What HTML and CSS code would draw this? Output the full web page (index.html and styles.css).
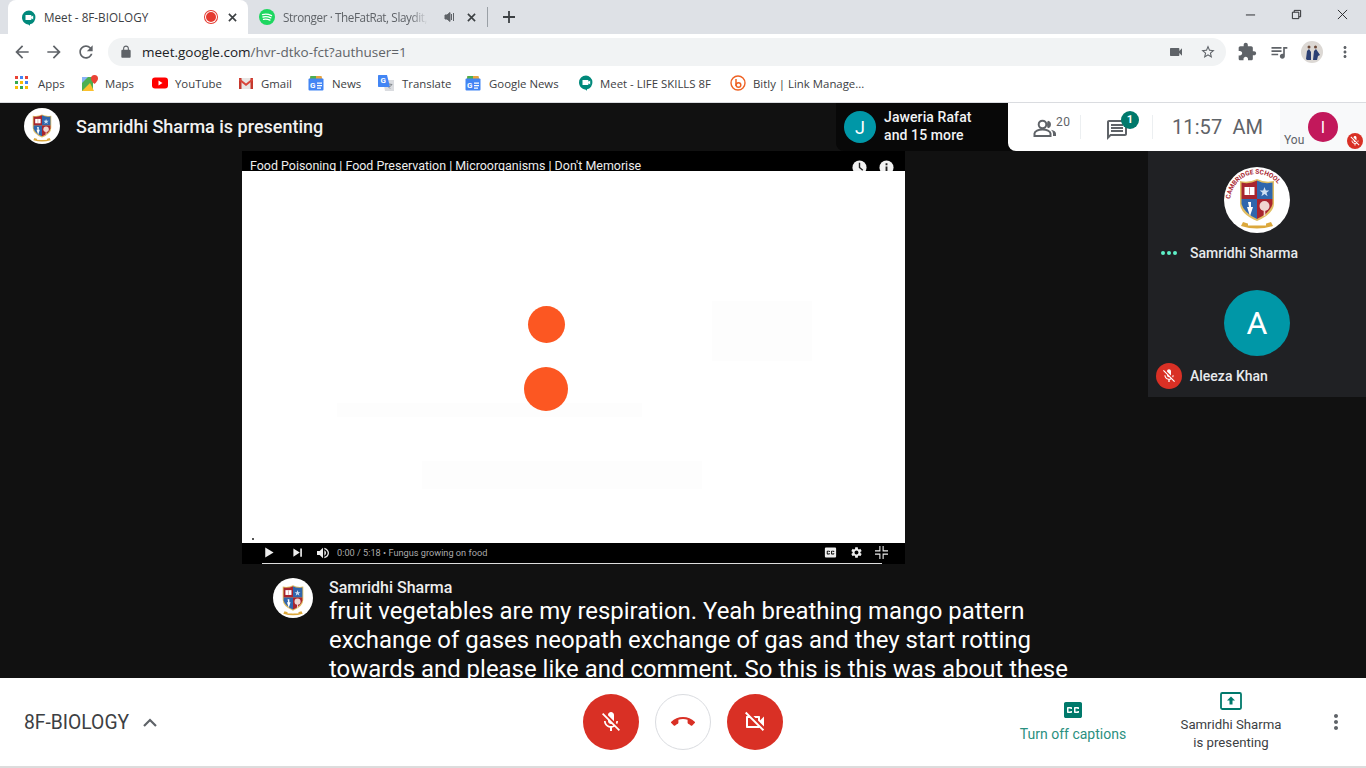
FILE: index.html
```html
<!DOCTYPE html>
<html lang="en">
<head>
    <meta charset="UTF-8">
    <title>Meet - 8F-BIOLOGY</title>
    <link rel="stylesheet" href="styles.css">
</head>
<body>
    <svg class="sprite" width="0" height="0">
        <symbol id="crest" viewBox="0 0 66 66">
            <circle cx="33" cy="33" r="33" fill="#fff"/>
            <path d="M16 14q9 2 17-2 8 4 17 2v22q0 11-17 18-17-7-17-18z" fill="#e0bd62"/>
            <path d="M17.500 15.500q8 2 15.500-2v18.500H17.500z" fill="#a8252f"/>
            <path d="M33 13.500q7 4 15.500 2V32H33z" fill="#2f66ad"/>
            <path d="M17.500 32H33v20q-13-6-15.500-15z" fill="#2f66ad"/>
            <path d="M33 32h15.500v5q-2.500 9-15.500 15z" fill="#a8252f"/>
            <path d="M20.500 20h10v8h-10z" fill="#fff"/>
            <path d="M25.500 20.500v7" stroke="#a8252f" stroke-width=".6"/>
            <path d="M40.500 20l1.300 3.500h3.500l-2.800 2.200 1.100 3.500-3.100-2.200-3.100 2.200 1.100-3.500-2.800-2.200h3.500z" fill="#cfe0f2"/>
            <path d="M24 35h3v5h2l-3 9-3-9h2z" fill="#fff"/>
            <circle cx="40.500" cy="39" r="5" fill="#f0d6d0"/>
            <path d="M39.700 43h1.600v6h-1.600z" fill="#f0d6d0"/>
            <path d="M19 55q14 6 28 0l2 4q-16 5-32 0z" fill="#dca83c"/>
            <path d="M24 55.500h18v3H24z" fill="#fff"/>
        </symbol>
        <symbol id="meetIcon" viewBox="0 0 16 16">
            <path d="M8 .5a7 7 0 0 0-7 7c0 3.600 2.800 6.500 6.300 6.900l1.700 1.400v-1.500a7 7 0 0 0-1-13.800z" fill="#00897b"/>
            <path d="M4.500 5h5.200c.4 0 .8.300.8.800v.9l1.700-1.300v4.200l-1.700-1.300v.9c0 .5-.4.800-.8.800H4.500z" fill="#fff"/>
        </symbol>
        <symbol id="micOff" viewBox="0 0 24 24">
            <path d="M19 11h-1.700c0 .74-.16 1.430-.43 2.050l1.230 1.230c.56-.98.9-2.090.9-3.280zm-4.020.17c0-.06.02-.11.02-.17V5c0-1.660-1.340-3-3-3S9 3.340 9 5v.18l5.980 5.990zM4.270 3L3 4.270l6.010 6.010V11c0 1.660 1.330 3 2.990 3 .22 0 .44-.03.65-.08l1.660 1.660c-.71.33-1.500.52-2.310.52-2.760 0-5.300-2.100-5.300-5.100H5c0 3.410 2.720 6.230 6 6.720V21h2v-3.280c.91-.13 1.770-.45 2.540-.9L19.730 21 21 19.730 4.270 3z" fill="currentColor"/>
        </symbol>
    </svg>

    <div class="tabstrip">
        <div class="tab tab-active">
            <svg class="favicon"><use href="#meetIcon"/></svg>
            <span class="tab-title">Meet - 8F-BIOLOGY</span>
            <span class="rec-dot"></span>
            <svg class="tab-close" viewBox="0 0 10 10"><path d="M1 1l8 8M9 1l-8 8"/></svg>
        </div>
        <div class="tab tab-other">
            <svg class="favicon" viewBox="0 0 16 16">
                <circle cx="8" cy="8" r="8" fill="#1ed760"/>
                <path d="M3.500 5.600q4.500-1.200 9 1M4 8q4-1 7.800.9M4.500 10.300q3.300-.8 6.400.8" fill="none" stroke="#fff" stroke-width="1.300" stroke-linecap="round"/>
            </svg>
            <span class="tab-title tab-fade">Stronger · TheFatRat, Slaydit,</span>
            <svg class="tab-audio" viewBox="0 0 12 12"><path d="M1 4h2l3-2.500v9L3 8H1zM7.500 3v6M9.500 2v8" fill="#5f6368" stroke="#5f6368"/></svg>
            <svg class="tab-close" viewBox="0 0 10 10"><path d="M1 1l8 8M9 1l-8 8"/></svg>
        </div>
        <span class="tab-sep"></span>
        <svg class="new-tab" viewBox="0 0 12 12"><path d="M6 0v12M0 6h12"/></svg>
        <div class="window-btns">
            <svg viewBox="0 0 12 12"><path d="M1 6.500h10"/></svg>
            <svg viewBox="0 0 12 12"><path d="M1.500 3.500h7v7h-7zM3.500 3.500v-2h7v7h-2"/></svg>
            <svg viewBox="0 0 12 12"><path d="M1 1l10 10M11 1L1 11"/></svg>
        </div>
    </div>

    <div class="toolbar">
        <svg class="tool-icon" viewBox="0 0 24 24"><path d="M20 11H7.830l5.590-5.590L12 4l-8 8 8 8 1.410-1.410L7.830 13H20v-2z"/></svg>
        <svg class="tool-icon" viewBox="0 0 24 24"><path d="M12 4l-1.410 1.410L16.170 11H4v2h12.170l-5.580 5.590L12 20l8-8z"/></svg>
        <svg class="tool-icon" viewBox="0 0 24 24"><path d="M17.650 6.350C16.200 4.900 14.210 4 12 4c-4.420 0-7.990 3.580-7.990 8s3.570 8 7.990 8c3.730 0 6.840-2.550 7.730-6h-2.080c-.82 2.330-3.040 4-5.650 4-3.310 0-6-2.690-6-6s2.690-6 6-6c1.660 0 3.140.69 4.220 1.780L13 11h7V4l-2.350 2.350z"/></svg>
        <div class="omnibox">
            <svg class="lock" viewBox="0 0 24 24"><path d="M18 8h-1V6c0-2.760-2.240-5-5-5S7 3.240 7 6v2H6c-1.100 0-2 .9-2 2v10c0 1.100.9 2 2 2h12c1.100 0 2-.9 2-2V10c0-1.100-.9-2-2-2zm-2.900 0H8.900V6c0-1.710 1.390-3.100 3.100-3.100 1.710 0 3.100 1.390 3.100 3.100v2z"/></svg>
            <span class="url"><b>meet.google.com</b>/hvr-dtko-fct?authuser=1</span>
            <svg class="omni-icon" viewBox="0 0 24 24"><path d="M17 10.500V7c0-.55-.45-1-1-1H4c-.55 0-1 .45-1 1v10c0 .55.45 1 1 1h12c.55 0 1-.45 1-1v-3.500l4 4v-11l-4 4z"/></svg>
            <svg class="omni-icon" viewBox="0 0 24 24"><path d="M22 9.240l-7.190-.62L12 2 9.190 8.630 2 9.240l5.460 4.730L5.820 21 12 17.270 18.180 21l-1.630-7.030L22 9.240zM12 15.400l-3.760 2.270 1-4.280-3.320-2.880 4.380-.38L12 6.100l1.710 4.040 4.380.38-3.320 2.880 1 4.280L12 15.400z"/></svg>
        </div>
        <svg class="tool-icon" viewBox="0 0 24 24"><path d="M20.500 11H19V7c0-1.100-.9-2-2-2h-4V3.500C13 2.120 11.880 1 10.500 1S8 2.120 8 3.500V5H4c-1.100 0-1.990.9-1.990 2v3.800H3.500c1.490 0 2.700 1.210 2.700 2.700s-1.210 2.700-2.700 2.700H2V20c0 1.100.9 2 2 2h3.800v-1.500c0-1.490 1.210-2.700 2.700-2.700 1.490 0 2.700 1.210 2.700 2.700V22H17c1.100 0 2-.9 2-2v-4h1.500c1.380 0 2.500-1.120 2.500-2.500S21.880 11 20.500 11z"/></svg>
        <svg class="tool-icon" viewBox="0 0 24 24"><path d="M15 6H3v2h12V6zm0 4H3v2h12v-2zM3 16h8v-2H3v2zM17 6v8.180c-.31-.11-.65-.18-1-.18-1.660 0-3 1.340-3 3s1.340 3 3 3 3-1.340 3-3V8h3V6h-5z"/></svg>
        <svg class="profile" viewBox="0 0 22 22">
            <circle cx="11" cy="11" r="11" fill="#dcd8d4"/>
            <path d="M5 18l1-8 2-2 2 3v8H6zM12 19l1-9 2-2 2 3 2 3-2 1-1 4z" fill="#2b3f73"/>
            <circle cx="8" cy="6" r="1.500" fill="#6b4a3a"/>
            <circle cx="14.500" cy="6" r="1.500" fill="#6b4a3a"/>
        </svg>
        <svg class="tool-icon" viewBox="0 0 24 24"><path d="M12 8c1.100 0 2-.9 2-2s-.9-2-2-2-2 .9-2 2 .9 2 2 2zm0 2c-1.100 0-2 .9-2 2s.9 2 2 2 2-.9 2-2-.9-2-2-2zm0 6c-1.100 0-2 .9-2 2s.9 2 2 2 2-.9 2-2-.9-2-2-2z"/></svg>
    </div>

    <div class="bookmarks">
        <a class="bm bm-apps">
            <svg class="bm-icon" viewBox="0 0 14 14">
                <path d="M0 0h3v3H0z" fill="#ea4335"/><path d="M5 0h3v3H5z" fill="#4285f4"/><path d="M10 0h3v3h-3z" fill="#ea4335"/>
                <path d="M0 5h3v3H0z" fill="#34a853"/><path d="M5 5h3v3H5z" fill="#fbbc05"/><path d="M10 5h3v3h-3z" fill="#4285f4"/>
                <path d="M0 10h3v3H0z" fill="#fbbc05"/><path d="M5 10h3v3H5z" fill="#34a853"/><path d="M10 10h3v3h-3z" fill="#fbbc05"/>
            </svg>Apps</a>
        <a class="bm bm-maps">
            <svg class="bm-icon" viewBox="0 0 16 16">
                <path d="M0 2h11v14H0z" fill="#4caf50"/>
                <path d="M0 16l8-8 4 8z" fill="#fbc02d"/>
                <path d="M0 2h6L0 8z" fill="#8ab4f8"/>
                <path d="M12.500 0a3.500 3.500 0 0 0-3.500 3.500c0 2.500 3.500 5.500 3.500 5.500s3.500-3 3.500-5.500A3.500 3.500 0 0 0 12.500 0z" fill="#ea4335"/>
            </svg>Maps</a>
        <a class="bm bm-yt">
            <svg class="bm-icon" viewBox="0 0 16 16"><rect y="2.500" width="16" height="11" rx="3" fill="#f00"/><path d="M6.500 5.500l4 2.500-4 2.500z" fill="#fff"/></svg>YouTube</a>
        <a class="bm bm-gmail">
            <svg class="bm-icon" viewBox="0 0 16 16"><path d="M1 3h14v11H1z" fill="#e8e6e4"/><path d="M1 3h2.500v11H1zM12.500 3H15v11h-2.500z" fill="#c5382d"/><path d="M1 3l7 5.500L15 3v2.500L8 11 1 5.500z" fill="#d9453a"/></svg>Gmail</a>
        <a class="bm bm-news">
            <svg class="bm-icon" viewBox="0 0 16 16">
                <path d="M2.500 1h11l1 4h-13z" fill="#e8a33d"/>
                <path d="M2.500 1h5.500v3H2z" fill="#4caf50"/>
                <rect x="0.500" y="3.500" width="15" height="12" rx="1" fill="#4285f4"/>
                <text class="icon-letter" x="2" y="12.500">G</text>
                <path d="M9 7.500h5v1.300H9zM9 10h5v1.300H9zM9 12.500h4v1.300H9z" fill="#fff"/>
            </svg>News</a>
        <a class="bm bm-translate">
            <svg class="bm-icon" viewBox="0 0 16 16">
                <path d="M5 5h11v11H7z" fill="#dadce0"/>
                <path d="M1 0h8l3 12H1c-.6 0-1-.4-1-1V1c0-.6.4-1 1-1z" fill="#4285f4"/>
                <text class="icon-letter" x="2.500" y="8">G</text>
                <path d="M11 9l3 .5-3 3 1 1" fill="none" stroke="#80868b"/>
            </svg>Translate</a>
        <a class="bm bm-gnews">
            <svg class="bm-icon" viewBox="0 0 16 16">
                <path d="M2.500 1h11l1 4h-13z" fill="#e8a33d"/>
                <path d="M2.500 1h5.500v3H2z" fill="#4caf50"/>
                <rect x="0.500" y="3.500" width="15" height="12" rx="1" fill="#4285f4"/>
                <text class="icon-letter" x="2" y="12.500">G</text>
                <path d="M9 7.500h5v1.300H9zM9 10h5v1.300H9zM9 12.500h4v1.300H9z" fill="#fff"/>
            </svg>Google News</a>
        <a class="bm bm-meet"><svg class="bm-icon"><use href="#meetIcon"/></svg>Meet - LIFE SKILLS 8F</a>
        <a class="bm">
            <svg class="bm-icon" viewBox="0 0 16 16"><circle cx="8" cy="8" r="7" fill="none" stroke="#ee6123" stroke-width="1.400"/><path d="M6 4v7" stroke="#ee6123" stroke-width="1.500"/><circle cx="8.500" cy="10" r="2.300" fill="none" stroke="#ee6123" stroke-width="1.500"/></svg>Bitly | Link Manage...</a>
    </div>

    <div class="meet">
        <div class="top-row">
            <div class="presenter">
                <svg class="presenter-avatar"><use href="#crest"/></svg>
                <span>Samridhi Sharma is presenting</span>
            </div>
            <div class="top-right">
                <div class="people-pill">
                    <span class="avatar-j">J</span>
                    <span class="pill-names">Jaweria Rafat<br>and 15 more</span>
                </div>
                <div class="info-panel">
                    <div class="info-cell cell-people">
                        <svg class="people-icon" viewBox="0 0 24 18">
                            <circle cx="9.500" cy="5.500" r="3.800" fill="none" stroke="#5f6368" stroke-width="2"/>
                            <path d="M1.500 17v-2.500c0-2.500 4-4 8-4s8 1.500 8 4V17z" fill="none" stroke="#5f6368" stroke-width="2"/>
                            <path d="M15 1.800a3.800 3.800 0 0 1 0 7.400q-1-.5-1-3.700t1-3.700zM18 10.800q5 1 5 4V17h-3v-2.500q0-2-2-3.700z" fill="#5f6368"/>
                        </svg>
                        <span class="people-count">20</span>
                    </div>
                    <div class="info-cell cell-chat">
                        <svg class="chat-icon" viewBox="0 0 24 24"><path d="M20 2H4c-1.100 0-1.990.9-1.990 2L2 22l4-4h14c1.100 0 2-.9 2-2V4c0-1.100-.9-2-2-2zm0 14H5.170L4 17.170V4h16v12zM6 12h12v2H6zm0-3h12v2H6zm0-3h12v2H6z"/></svg>
                        <span class="chat-badge">1</span>
                    </div>
                    <div class="clock">11:57&nbsp; AM</div>
                    <div class="you-cell">
                        <span class="you-label">You</span>
                        <span class="avatar-i">I</span>
                        <span class="you-mic"><svg><use href="#micOff"/></svg></span>
                    </div>
                </div>
            </div>
        </div>

        <div class="main">
            <div class="center">
                <div class="video">
                    <div class="video-top">
                        <span class="video-title">Food Poisoning | Food Preservation | Microorganisms | Don't Memorise</span>
                        <span class="yt-round">
                            <svg viewBox="0 0 16 16"><circle cx="8" cy="8" r="7.500" fill="#f2f2f2"/><path d="M8 3v5l3.500 3" fill="none" stroke="#222" stroke-width="1.500"/></svg>
                            <svg viewBox="0 0 16 16"><circle cx="8" cy="8" r="7.500" fill="#f2f2f2"/><path d="M7 7h2v6H7zM7 3.500h2v2H7z" fill="#222"/></svg>
                        </span>
                    </div>
                    <div class="frame">
                        <span class="ghost ghost-a"></span>
                        <span class="ghost ghost-b"></span>
                        <span class="ghost ghost-c"></span>
                        <div class="dots">
                            <span class="dot dot-small"></span>
                            <span class="dot dot-big"></span>
                        </div>
                        <span class="pink-tick"></span>
                    </div>
                    <div class="video-controls">
                        <svg class="vc-play" viewBox="0 0 12 12"><path d="M1.500 0l10 6-10 6z"/></svg>
                        <svg class="vc-next" viewBox="0 0 12 12"><path d="M1.500 1.500l7 4.500-7 4.500zM9 1.500h1.800v9H9z"/></svg>
                        <svg class="vc-vol" viewBox="0 0 24 24"><path d="M3 9v6h4l5 5V4L7 9zM14 4v2.200c3 .9 5 3 5 5.800s-2 4.900-5 5.800V20c4-.9 7-4 7-8s-3-7.100-7-8zM16.500 12c0-1.800-1-3.300-2.500-4v8c1.500-.7 2.500-2.200 2.500-4z"/></svg>
                        <span class="vc-time">0:00 / 5:18 • Fungus growing on food</span>
                        <svg class="vc-icon vc-cc" viewBox="0 0 24 24"><path d="M19 4H5c-1.110 0-2 .9-2 2v12c0 1.100.89 2 2 2h14c1.100 0 2-.9 2-2V6c0-1.100-.9-2-2-2zm-8 7H9.500v-.5h-2v3h2V13H11v1c0 .55-.45 1-1 1H7c-.55 0-1-.45-1-1v-4c0-.55.45-1 1-1h3c.55 0 1 .45 1 1v1zm7 0h-1.500v-.5h-2v3h2V13H18v1c0 .55-.45 1-1 1h-3c-.55 0-1-.45-1-1v-4c0-.55.45-1 1-1h3c.55 0 1 .45 1 1v1z"/></svg>
                        <svg class="vc-icon" viewBox="0 0 24 24"><path d="M19.140 12.940c.04-.3.06-.61.06-.94 0-.32-.02-.64-.07-.94l2.030-1.580c.18-.14.23-.41.12-.61l-1.920-3.320c-.12-.22-.37-.29-.59-.22l-2.390.96c-.5-.38-1.030-.7-1.620-.94l-.36-2.540c-.04-.24-.24-.41-.48-.41h-3.840c-.24 0-.43.17-.47.41l-.36 2.540c-.59.24-1.130.57-1.620.94l-2.390-.96c-.22-.08-.47 0-.59.22L2.740 8.870c-.12.21-.08.47.12.61l2.030 1.580c-.05.3-.09.63-.09.94s.02.64.07.94l-2.030 1.580c-.18.14-.23.41-.12.61l1.920 3.320c.12.22.37.29.59.22l2.390-.96c.5.38 1.030.7 1.620.94l.36 2.540c.05.24.24.41.48.41h3.840c.24 0 .44-.17.47-.41l.36-2.540c.59-.24 1.130-.56 1.620-.94l2.390.96c.22.08.47 0 .59-.22l1.920-3.320c.12-.22.07-.47-.12-.61l-2.010-1.580zM12 15.600c-1.980 0-3.600-1.620-3.600-3.600s1.620-3.600 3.600-3.600 3.600 1.620 3.600 3.600-1.620 3.600-3.600 3.600z"/></svg>
                        <svg class="vc-icon" viewBox="0 0 12 12"><path d="M4 0v4H0v1h5V0zM8 0v4h4v1H7V0zM0 7v1h4v4h1V7zM12 7v1H8v4H7V7z"/></svg>
                        <span class="vc-progress"></span>
                    </div>
                </div>
                <div class="caption">
                    <svg class="caption-avatar"><use href="#crest"/></svg>
                    <div class="caption-body">
                        <div class="caption-name">Samridhi Sharma</div>
                        <div class="caption-text">fruit vegetables are my respiration. Yeah breathing mango pattern exchange of gases neopath exchange of gas and they start rotting towards and please like and comment. So this is this was about these</div>
                    </div>
                </div>
            </div>
            <div class="side">
                <div class="tile">
                    <svg class="tile-avatar" viewBox="0 0 66 66">
                        <use href="#crest"/>
                        <path id="crestArc" d="M6.500 36a26.500 26.500 0 0 1 53-5" fill="none"/>
                        <text class="crest-text"><textPath href="#crestArc" startOffset="4">CAMBRIDGE SCHOOL</textPath></text>
                    </svg>
                    <div class="tile-name">
                        <span class="tile-status"><i></i><i></i><i></i></span>
                        <span>Samridhi Sharma</span>
                    </div>
                </div>
                <div class="tile">
                    <span class="tile-avatar tile-letter">A</span>
                    <div class="tile-name">
                        <span class="tile-status tile-muted"><svg><use href="#micOff"/></svg></span>
                        <span>Aleeza Khan</span>
                    </div>
                </div>
            </div>
        </div>

        <div class="bottom-bar">
            <div class="meeting-name">
                <span>8F-BIOLOGY</span>
                <svg viewBox="0 0 14 9"><path d="M1 8l6-6 6 6"/></svg>
            </div>
            <div class="call-btns">
                <span class="call-btn btn-red"><svg><use href="#micOff"/></svg></span>
                <span class="call-btn btn-hang">
                    <svg viewBox="0 0 24 24"><path d="M12 9c-1.600 0-3.150.25-4.600.72v3.100c0 .39-.23.74-.56.9-.98.49-1.870 1.120-2.660 1.850-.18.18-.43.28-.7.28-.28 0-.53-.11-.71-.29L.29 13.080c-.18-.17-.29-.42-.29-.7 0-.28.11-.53.29-.71C3.340 8.780 7.460 7 12 7s8.660 1.780 11.710 4.670c.18.18.29.43.29.71 0 .28-.11.53-.29.71l-2.480 2.480c-.18.18-.43.29-.71.29-.27 0-.52-.11-.7-.28-.79-.74-1.690-1.360-2.670-1.850-.33-.16-.56-.5-.56-.9v-3.100C15.150 9.250 13.600 9 12 9z"/></svg>
                </span>
                <span class="call-btn btn-red">
                    <svg viewBox="0 0 24 24"><path d="M9.560 8l-2-2-4.150-4.140L2 3.270 4.730 6H4c-.55 0-1 .45-1 1v10c0 .55.45 1 1 1h12c.21 0 .39-.08.55-.18L19.730 21l1.410-1.410-8.860-8.860L9.560 8zM5 16V8h1.730l8 8H5zm10-8v2.610l6 6V6.500l-4 4V7c0-.55-.45-1-1-1h-5.610l2 2H15z"/></svg>
                </span>
            </div>
            <div class="bar-right">
                <div class="bar-action action-captions">
                    <svg viewBox="0 0 18 16"><path d="M16.200 0H1.800C.8 0 0 .8 0 1.800v12.400C0 15.200.8 16 1.800 16h14.400c1 0 1.800-.8 1.800-1.800V1.800C18 .8 17.200 0 16.200 0zM8 7H6.500v-.5h-2v3h2V9H8v1c0 .55-.45 1-1 1H4c-.55 0-1-.45-1-1V6c0-.55.45-1 1-1h3c.55 0 1 .45 1 1zm7 0h-1.500v-.5h-2v3h2V9H15v1c0 .55-.45 1-1 1h-3c-.55 0-1-.45-1-1V6c0-.55.45-1 1-1h3c.55 0 1 .45 1 1z"/></svg>
                    <span>Turn off captions</span>
                </div>
                <div class="bar-action action-present">
                    <svg viewBox="0 0 22 18"><rect x="1" y="1" width="20" height="16" rx="1.200" fill="none" stroke="#00796b" stroke-width="1.800"/><path d="M11 4.500l4 4h-2.500v4h-3v-4H7z" fill="#00796b"/></svg>
                    <span>Samridhi Sharma<br>is presenting</span>
                </div>
                <svg class="bar-more" viewBox="0 0 24 24"><path d="M12 8c1.100 0 2-.9 2-2s-.9-2-2-2-2 .9-2 2 .9 2 2 2zm0 2c-1.100 0-2 .9-2 2s.9 2 2 2 2-.9 2-2-.9-2-2-2zm0 6c-1.100 0-2 .9-2 2s.9 2 2 2 2-.9 2-2-.9-2-2-2z"/></svg>
            </div>
        </div>
        <div class="bottom-edge"></div>
    </div>
</body>
</html>
```

FILE: styles.css
```css
* {
    box-sizing: border-box;
}
html, body {
    margin: 0;
    height: 768px;
    overflow: hidden;
}
body {
    font-family: 'Roboto', sans-serif;
    background-color: #fff;
    display: flex;
    flex-direction: column;
}
svg {
    display: block;
    flex: none;
}
.sprite {
    position: absolute;
}
.crest-text {
    font-family: 'Roboto', sans-serif;
    font-size: 6.500px;
    font-weight: 700;
    fill: #a8252f;
}
.icon-letter {
    font-family: 'Roboto', sans-serif;
    font-size: 8px;
    font-weight: 700;
    fill: #fff;
}

/* browser chrome */
.tabstrip {
    height: 34px;
    background-color: #dee1e6;
    display: flex;
    align-items: flex-end;
    padding-left: 8px;
    flex: none;
}
.tab {
    height: 34px;
    display: flex;
    align-items: center;
    font-family: 'Open Sans', sans-serif;
    font-size: 11.700px;
    color: #3c4043;
}
.tab-active {
    width: 240px;
    background-color: #fff;
    border-radius: 8px 8px 0 0;
    padding: 0 11px 0 13px;
}
.tab-other {
    width: 239px;
    padding: 0 11px 0 11px;
    color: #5f6368;
}
.favicon {
    width: 16px;
    height: 16px;
    margin-right: 7px;
}
.tab-other .favicon {
    margin-right: 8px;
}
.tab-active .favicon {
    margin-top: 1px;
}
.tab-title {
    flex: 1;
    white-space: nowrap;
}
.tab-fade {
    letter-spacing: -.4px;
    -webkit-mask-image: linear-gradient(to right, #000 84%, transparent 96%);
}
.rec-dot {
    width: 12px;
    height: 12px;
    border-radius: 50%;
    background-color: #e53a30;
    box-shadow: inset 0 0 0 1px #fff, 0 0 0 1px #e53a30;
    margin-right: 11px;
}
.tab-close {
    width: 9px;
    height: 9px;
    stroke: #3c4043;
    stroke-width: 1.800;
    fill: none;
}
.tab-audio {
    width: 12px;
    height: 12px;
    margin: 0 11px 0 10px;
}
.tab-sep {
    width: 1px;
    height: 20px;
    background-color: #9aa0a6;
    margin: 0 15px 7px 0;
}
.new-tab {
    width: 12px;
    height: 12px;
    stroke: #3c4043;
    stroke-width: 1.800;
    margin: 0 0 11px 0;
}
.window-btns {
    margin-left: auto;
    height: 34px;
    display: flex;
    align-items: center;
    gap: 35px;
    padding: 0 18px 6px 0;
}
.window-btns svg {
    width: 11px;
    height: 11px;
    stroke: #202124;
    stroke-width: 1;
    fill: none;
}
.toolbar {
    height: 32px;
    display: flex;
    align-items: center;
    padding: 0 12px;
    flex: none;
    background-color: #fff;
}
.tool-icon {
    width: 20px;
    height: 20px;
    fill: #5f6368;
    margin-right: 12px;
}
.toolbar > .tool-icon {
    margin-top: 4px;
}
.toolbar .tool-icon:last-child {
    width: 18px;
    margin: 4px 0 0 13px;
}
.omnibox {
    width: 1118px;
    height: 28px;
    margin: 4px 11px 0 0;
    background-color: #f1f3f4;
    border-radius: 14px;
    display: flex;
    align-items: center;
    padding: 0 10px 0 11px;
    flex: none;
}
.lock {
    width: 14px;
    height: 14px;
    fill: #5f6368;
    margin-right: 9px;
}
.url {
    flex: 1;
    font-family: 'Open Sans', sans-serif;
    font-size: 13.500px;
    color: #5f6368;
}
.url b {
    font-weight: 400;
    color: #202124;
}
.omni-icon {
    width: 16px;
    height: 16px;
    fill: #5f6368;
    margin-left: 16px;
}
.profile {
    width: 22px;
    height: 22px;
    margin: 4px 0 0 0;
}
.bookmarks {
    height: 37px;
    display: flex;
    align-items: center;
    padding: 0 0 2px 15px;
    border-bottom: 1px solid #dadce0;
    font-family: 'Open Sans', sans-serif;
    font-size: 11.400px;
    color: #3c4043;
    flex: none;
}
.bm {
    display: flex;
    align-items: center;
    white-space: nowrap;
}
.bm-icon {
    width: 16px;
    height: 16px;
    margin-right: 7px;
}
.bm-apps .bm-icon {
    width: 14px;
    height: 14px;
    margin-right: 9px;
}
.bm-apps { width: 67px; }
.bm-maps { width: 70px; }
.bm-yt { width: 86px; }
.bm-gmail { width: 70px; }
.bm-news { width: 70px; }
.bm-news .bm-icon { margin-right: 8px; }
.bm-translate { width: 87px; }
.bm-translate .bm-icon { margin-right: 8px; }
.bm-gnews { width: 113px; }
.bm-gnews .bm-icon { margin-right: 8px; }
.bm-meet { width: 152px; }
.bm-meet .bm-icon {
    margin-right: 6px;
}

/* meet */
.meet {
    flex: 1;
    background-color: #111;
    display: flex;
    flex-direction: column;
    min-height: 0;
}
.top-row {
    height: 48px;
    display: flex;
    justify-content: space-between;
    flex: none;
}
.presenter {
    display: flex;
    align-items: center;
    padding: 0 0 2px 24px;
    gap: 16px;
    font-size: 18px;
    font-weight: 500;
    color: #f1f1f1;
}
.presenter-avatar {
    width: 36px;
    height: 36px;
}
.top-right {
    display: flex;
    background-color: #080808;
    border-bottom-left-radius: 8px;
}
.people-pill {
    width: 172px;
    display: flex;
    align-items: center;
    padding-left: 8px;
    gap: 8px;
}
.avatar-j {
    width: 32px;
    height: 32px;
    border-radius: 50%;
    background-color: #0097a7;
    color: #fff;
    font-size: 18px;
    display: flex;
    align-items: center;
    justify-content: center;
}
.pill-names {
    font-size: 14px;
    font-weight: 500;
    line-height: 18px;
    letter-spacing: .1px;
    color: #f1f3f4;
    margin-top: -2px;
}
.info-panel {
    width: 358px;
    background-color: #fff;
    border-bottom-left-radius: 8px;
    display: flex;
    align-items: center;
}
.info-cell {
    height: 24px;
    display: flex;
    border-right: 1px solid #eceff1;
    flex: none;
    position: relative;
}
.cell-people {
    width: 73px;
    padding-left: 25px;
    align-items: center;
}
.people-icon {
    width: 24px;
    height: 18px;
    margin-top: 2px;
}
.people-count {
    font-size: 12px;
    color: #5f6368;
    margin: -10px 0 0 -1px;
    letter-spacing: .5px;
}
.cell-chat {
    width: 72px;
    padding-left: 24px;
}
.chat-icon {
    width: 24px;
    height: 24px;
    fill: #5f6368;
    margin-top: 3px;
}
.chat-badge {
    position: absolute;
    left: 40px;
    top: -4px;
    width: 18px;
    height: 18px;
    border-radius: 50%;
    background-color: #00796b;
    color: #fff;
    font-size: 11px;
    font-weight: 700;
    text-align: center;
    line-height: 18px;
}
.clock {
    width: 127px;
    padding-left: 19px;
    font-size: 20px;
    color: #5f6368;
    letter-spacing: .1px;
    white-space: nowrap;
}
.you-cell {
    flex: 1;
    height: 48px;
    background-color: #f8f9fa;
    position: relative;
}
.you-label {
    position: absolute;
    left: 4px;
    top: 30px;
    font-size: 12px;
    color: #5f6368;
}
.avatar-i {
    position: absolute;
    left: 28px;
    top: 9px;
    width: 30px;
    height: 30px;
    border-radius: 50%;
    background-color: #c2185b;
    color: #fff;
    font-size: 16px;
    display: flex;
    align-items: center;
    justify-content: center;
}
.you-mic {
    position: absolute;
    left: 67px;
    top: 30px;
    width: 16px;
    height: 16px;
    border-radius: 50%;
    background-color: #d93025;
    color: #fff;
    padding: 2px;
}
.you-mic svg {
    width: 12px;
    height: 12px;
}
.main {
    flex: 1;
    display: flex;
    min-height: 0;
    overflow: hidden;
}
.center {
    width: 1148px;
    flex: none;
}
.video {
    width: 663px;
    height: 413px;
    margin-left: 242px;
    display: flex;
    flex-direction: column;
    background-color: #000;
}
.video-top {
    height: 20px;
    display: flex;
    justify-content: space-between;
    padding-left: 8px;
    overflow: hidden;
    flex: none;
}
.video-title {
    font-size: 12.450px;
    color: #eee;
    line-height: 15px;
    padding-top: 7px;
    height: 20px;
}
.yt-round {
    display: flex;
    gap: 12px;
    padding: 9px 11px 0 0;
}
.yt-round svg {
    width: 15px;
    height: 15px;
}
.frame {
    flex: 1;
    background-color: #fff;
    position: relative;
    padding: 135px 0 0 282px;
}
.dots {
    width: 44px;
    display: flex;
    flex-direction: column;
    align-items: center;
    gap: 24px;
    position: relative;
}
.dot {
    border-radius: 50%;
    background-color: #fc5722;
}
.dot-small {
    width: 37px;
    height: 37px;
}
.dot-big {
    width: 44px;
    height: 44px;
}
.ghost {
    position: absolute;
    background-color: #fdfdfd;
}
.ghost-a {
    left: 95px;
    top: 232px;
    width: 305px;
    height: 14px;
}
.ghost-b {
    left: 180px;
    top: 290px;
    width: 280px;
    height: 28px;
}
.ghost-c {
    left: 470px;
    top: 130px;
    width: 100px;
    height: 60px;
}
.pink-tick {
    position: absolute;
    left: 10px;
    bottom: 3px;
    width: 2px;
    height: 2px;
    background-color: #555;
}
.video-controls {
    height: 21px;
    display: flex;
    align-items: center;
    padding: 0 17px 2px 22px;
    position: relative;
    flex: none;
    fill: #eee;
}
.vc-play {
    width: 10px;
    height: 11px;
    margin-right: 18px;
}
.vc-next {
    width: 11px;
    height: 11px;
    margin-right: 12px;
}
.vc-vol {
    width: 16px;
    height: 16px;
    margin-right: 6px;
}
.vc-time {
    flex: 1;
    font-size: 9.200px;
    color: #aaa;
}
.vc-icon {
    width: 13px;
    height: 13px;
    margin-left: 12px;
}
.vc-cc {
    width: 15px;
    height: 15px;
}
.vc-progress {
    position: absolute;
    left: 20px;
    right: 23px;
    bottom: 0;
    height: 1px;
    background-color: #ddd;
}
.caption {
    margin: 13px 0 0 273px;
    width: 800px;
    display: flex;
    gap: 16px;
}
.caption-avatar {
    width: 40px;
    height: 40px;
    margin-top: 1px;
}
.caption-body {
    flex: 1;
    padding-top: 1px;
}
.caption-name {
    font-size: 16px;
    font-weight: 500;
    color: #eee;
    line-height: 20px;
}
.caption-text {
    font-size: 23.950px;
    line-height: 29px;
    color: #fff;
    width: 745px;
    margin-top: -1px;
}
.side {
    width: 218px;
    height: 246px;
    background-color: #202124;
    padding-top: 16px;
    display: flex;
    flex-direction: column;
    gap: 24px;
}
.tile {
    display: flex;
    flex-direction: column;
}
.tile-avatar {
    width: 66px;
    height: 66px;
    margin-left: 76px;
}
.tile-letter {
    border-radius: 50%;
    background-color: #0097a7;
    color: #fff;
    font-size: 32px;
    display: flex;
    align-items: center;
    justify-content: center;
}
.tile-name {
    display: flex;
    align-items: center;
    height: 26px;
    margin-top: 7px;
    padding-left: 8px;
    gap: 8px;
    font-size: 14px;
    font-weight: 500;
    color: #e8eaed;
}
.tile-status {
    width: 26px;
    height: 26px;
    display: flex;
    align-items: center;
    justify-content: center;
    gap: 2px;
}
.tile-status i {
    width: 4px;
    height: 4px;
    border-radius: 50%;
    background-color: #5ef0c8;
}
.tile-muted {
    border-radius: 50%;
    background-color: #d93025;
    color: #fff;
}
.tile-muted svg {
    width: 16px;
    height: 16px;
}
.bottom-bar {
    height: 88px;
    background-color: #fff;
    display: grid;
    grid-template-columns: 1fr auto 1fr;
    align-items: center;
    flex: none;
    position: relative;
}
.bottom-edge {
    height: 2px;
    background-color: #dcdcdc;
    flex: none;
}
.meeting-name {
    display: flex;
    align-items: center;
    gap: 14px;
    padding-left: 24px;
    font-size: 19.300px;
    color: #3c4043;
}
.meeting-name svg {
    width: 14px;
    height: 9px;
    fill: none;
    stroke: #5f6368;
    stroke-width: 2.200;
}
.call-btns {
    display: flex;
    gap: 16px;
}
.call-btn {
    width: 56px;
    height: 56px;
    border-radius: 50%;
    display: flex;
    align-items: center;
    justify-content: center;
}
.call-btn svg {
    width: 24px;
    height: 24px;
}
.btn-red {
    background-color: #d93025;
    color: #fff;
    fill: #fff;
}
.btn-hang {
    border: 1px solid #dadce0;
    fill: #d93025;
}
.bar-right {
    display: flex;
    align-items: center;
    justify-content: flex-end;
}
.bar-action {
    display: flex;
    flex-direction: column;
    align-items: center;
    text-align: center;
    font-size: 13.200px;
    color: #3c4043;
    line-height: 18px;
}
.action-captions {
    width: 120px;
    margin: 1px 38px 0 0;
    font-size: 14px;
    color: #2a9080;
    gap: 7px;
}
.action-captions svg {
    width: 18px;
    height: 16px;
    fill: #00796b;
}
.action-present {
    width: 120px;
    margin: 0 33px 0 0;
    gap: 6px;
}
.action-present svg {
    width: 22px;
    height: 18px;
}
.bar-more {
    width: 24px;
    height: 24px;
    fill: #5f6368;
    margin-right: 18px;
}
```
